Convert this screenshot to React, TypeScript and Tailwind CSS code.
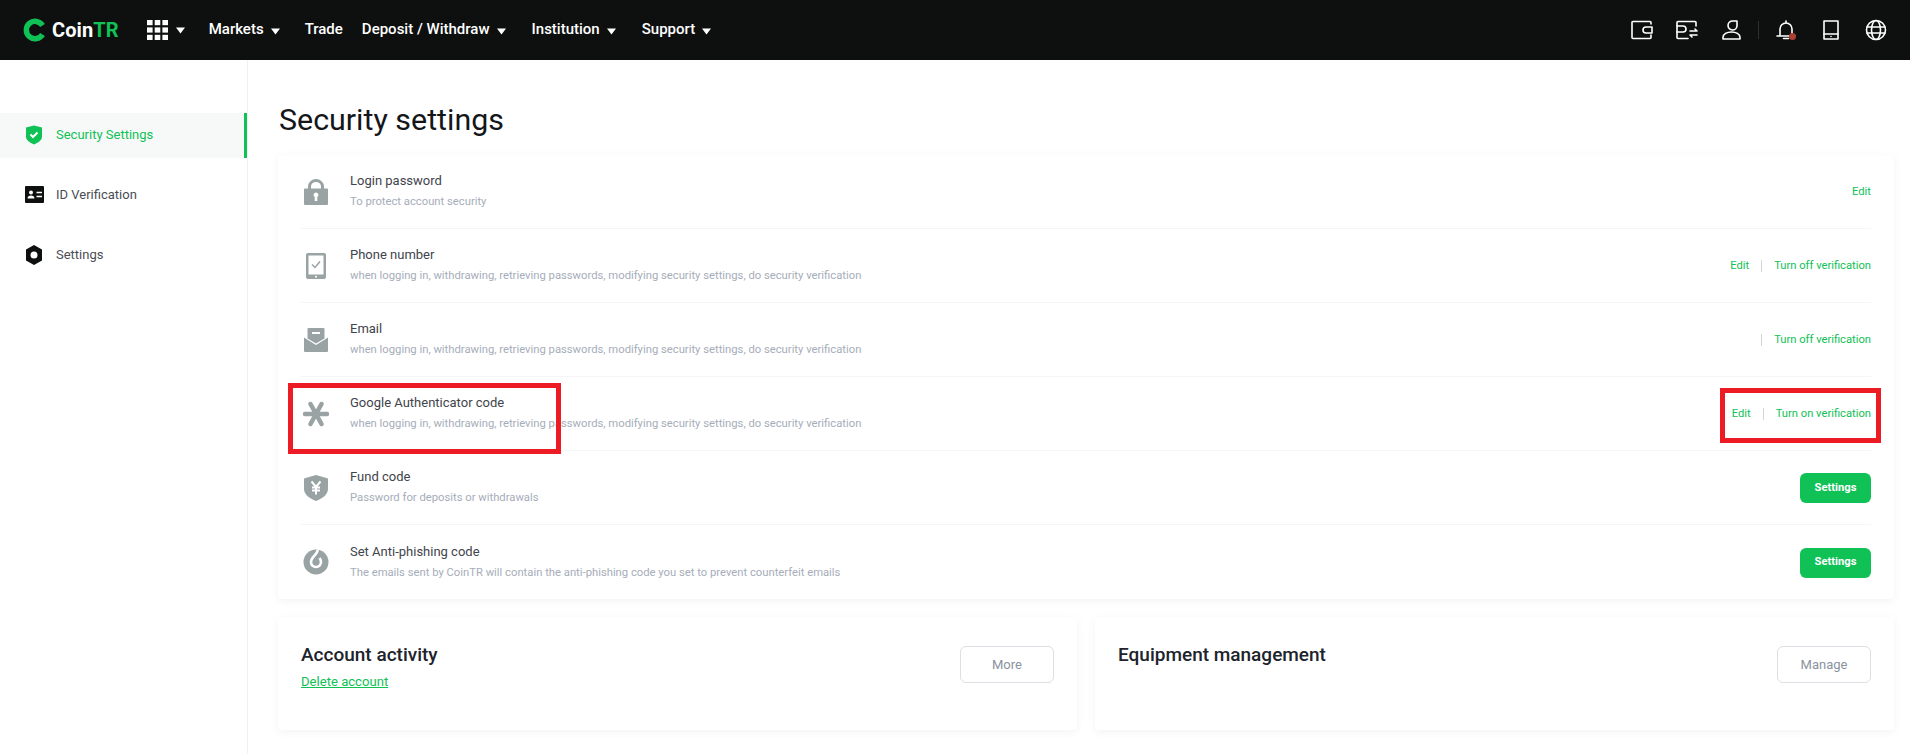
import type { ReactNode } from "react";

const GREEN = "#10c156";

function Caret({ className = "" }: { className?: string }) {
  return (
    <svg width="9" height="7" viewBox="0 0 9 7" className={className}>
      <path d="M0 .5h9L4.5 6.500z" fill="#fff" />
    </svg>
  );
}

function Logo() {
  return (
    <svg width="22" height="24" viewBox="0 0 22 24" className="shrink-0">
      <path
        d="M19.500 7.500A8.700 8.700 0 1 0 19.500 16.500"
        fill="none"
        stroke={GREEN}
        strokeWidth="5.500"
      />
    </svg>
  );
}

function GridIcon() {
  return (
    <svg width="21" height="20" viewBox="0 0 21 20" className="shrink-0">
      {[0, 7.400, 14.800].map((y) =>
        [0, 7.700, 15.400].map((x) => <rect key={`${x}-${y}`} x={x} y={y} width="5.600" height="5.200" fill="#fff" />)
      )}
    </svg>
  );
}

function NavItem({ label, caret = true, className = "" }: { label: string; caret?: boolean; className?: string }) {
  return (
    <div className={`flex items-center gap-[7px] text-[15px] font-medium text-white ${className}`}>
      <span className="pb-[2px]">{label}</span>
      {caret && <Caret className="mt-[3px]" />}
    </div>
  );
}

function HeaderIcons() {
  const stroke = { fill: "none", stroke: "#fff", strokeWidth: 1.6, strokeLinecap: "round" as const, strokeLinejoin: "round" as const };
  return (
    <div className="ml-auto flex items-center pr-[23px]">
      <svg width="22" height="20" viewBox="0 0 22 20" {...stroke}>
        <path d="M20 4V2.500a1 1 0 0 0-1-1H2a1 1 0 0 0-1 1v15a1 1 0 0 0 1 1h17a1 1 0 0 0 1-1V15" />
        <path d="M21 7h-6a3 3 0 0 0 0 6h6z" />
      </svg>
      <svg width="22" height="20" viewBox="0 0 22 20" className="ml-[23px]" {...stroke}>
        <path d="M20 6V2.500a1 1 0 0 0-1-1H2a1 1 0 0 0-1 1v15a1 1 0 0 0 1 1h10" />
        <path d="M1 6h6a3 3 0 0 1 0 6H1" />
        <path d="M14 11h7l-2-2M21 15h-7l2 2" />
      </svg>
      <svg width="19" height="20" viewBox="0 0 19 20" className="ml-[24px]" {...stroke}>
        <path d="M15 1H10a4.500 4.500 0 1 0 5 5z" />
        <path d="M1 19v-1.500C1 14 5 12 9.500 12s8.500 2 8.500 5.500V19z" />
      </svg>
      <div className="ml-[17px] h-[18px] w-px bg-[#2e3030]" />
      <div className="relative ml-[17px] h-[20px] w-[20px]">
        <svg width="20" height="20" viewBox="0 0 20 20" {...stroke}>
          <path d="M10 1v2M4 16V9a6 6 0 0 1 12 0v7M1 16h18M7.500 18.500h5" />
        </svg>
        <span className="absolute right-0 bottom-0 h-[7px] w-[7px] rounded-full bg-[#a8412f]" />
      </div>
      <svg width="16" height="20" viewBox="0 0 16 20" className="ml-[27px]" {...stroke}>
        <rect x="1" y="1" width="14" height="18" />
        <path d="M1 14h14" />
        <path d="M8 16.500h.01" />
      </svg>
      <svg width="22" height="22" viewBox="0 0 22 22" className="ml-[26px]" {...stroke}>
        <circle cx="11" cy="11" r="9.500" />
        <ellipse cx="11" cy="11" rx="4.500" ry="9.500" />
        <path d="M2 8h18M2 14h18" />
      </svg>
    </div>
  );
}

function Header() {
  return (
    <header className="flex h-[60px] items-center bg-[#0e1010] pl-[23px]">
      <Logo />
      <span className="ml-[7px] text-[20px] font-bold tracking-[0.1px] text-white">
        Coin<span className="text-[#10c156]">TR</span>
      </span>
      <div className="ml-[28px] flex items-center gap-[8px]">
        <GridIcon />
        <Caret />
      </div>
      <NavItem label="Markets" className="ml-[24px]" />
      <NavItem label="Trade" caret={false} className="ml-[25px]" />
      <NavItem label="Deposit / Withdraw" className="ml-[19px]" />
      <NavItem label="Institution" className="ml-[26px]" />
      <NavItem label="Support" className="ml-[26px]" />
      <HeaderIcons />
    </header>
  );
}

function SideItem({ icon, label, active = false }: { icon: ReactNode; label: string; active?: boolean }) {
  return (
    <div
      className={`flex h-[45px] items-center pb-[2px] pl-[25px] text-[13px] ${
        active ? "border-r-[3px] border-[#10c156] bg-[#f7f9f8] text-[#10c156]" : "text-[#4a4d55]"
      }`}
    >
      <span className="flex w-[31px] shrink-0">{icon}</span>
      {label}
    </div>
  );
}

function Sidebar() {
  return (
    <aside className="flex w-[248px] shrink-0 flex-col gap-[15px] border-r border-[#f0f1f2] pt-[53px]">
      <SideItem
        active
        label="Security Settings"
        icon={
          <svg width="18" height="20" viewBox="0 0 18 20">
            <path d="M1 2.500 9 .5l8 2V12c0 3-4 6-8 7.500C5 18 1 15 1 12z" fill="#10c156" />
            <path d="m5.500 9.500 2.500 2.500 4.500-4.500" fill="none" stroke="#fff" strokeWidth="2" />
          </svg>
        }
      />
      <SideItem
        label="ID Verification"
        icon={
          <svg width="19" height="17" viewBox="0 0 19 17">
            <rect width="19" height="17" rx="1" fill="#0e1010" />
            <circle cx="6" cy="6.500" r="2" fill="#fff" />
            <path d="M2.500 12.500c0-2 1.500-3 3.500-3s3.500 1 3.500 3z" fill="#fff" />
            <path d="M11.500 6.500H17M11.500 10.500H17" stroke="#fff" strokeWidth="1.500" />
          </svg>
        }
      />
      <SideItem
        label="Settings"
        icon={
          <svg width="18" height="20" viewBox="0 0 18 20">
            <path fillRule="evenodd" d="M9 0l8 4.500v11L9 20l-8-4.500v-11zM9 6.500a3.500 3.500 0 1 0 0 7 3.500 3.500 0 0 0 0-7z" fill="#0e1010" />
          </svg>
        }
      />
    </aside>
  );
}

const GRAY = "#9aa3a3";

const rowIcons: Record<string, ReactNode> = {
  lock: (
    <svg width="24" height="26" viewBox="0 0 24 26">
      <path d="M5.500 11V7.500a6.500 6 0 0 1 13 0V11" fill="none" stroke={GRAY} strokeWidth="3" />
      <path fillRule="evenodd" d="M1 9.500h22a1 1 0 0 1 1 1V25a1 1 0 0 1-1 1H1a1 1 0 0 1-1-1V10.500a1 1 0 0 1 1-1zM12 13.500a2.500 2.500 0 0 0-1.300 4.600V22h2.600v-3.900A2.500 2.500 0 0 0 12 13.500z" fill={GRAY} />
    </svg>
  ),
  phone: (
    <svg width="20" height="26" viewBox="0 0 20 26">
      <path fillRule="evenodd" d="M2 0h16a2 2 0 0 1 2 2v22a2 2 0 0 1-2 2H2a2 2 0 0 1-2-2V2a2 2 0 0 1 2-2zM2.500 2.500v19h15v-19z" fill={GRAY} />
      <path d="m6 11.500 3 3 5-6" fill="none" stroke={GRAY} strokeWidth="1.500" />
      <circle cx="10" cy="23.700" r="1" fill="#fff" />
    </svg>
  ),
  mail: (
    <svg width="24" height="24" viewBox="0 0 24 24">
      <path d="M4.500 0h15a1 1 0 0 1 1 1v9.500L12 15.500l-8.500-5V1a1 1 0 0 1 1-1z" fill={GRAY} />
      <path d="M8 5h8" stroke="#fff" strokeWidth="2" />
      <path d="M0 9.500l12 7.500 12-7.500V23a1 1 0 0 1-1 1H1a1 1 0 0 1-1-1z" fill={GRAY} />
    </svg>
  ),
  asterisk: (
    <svg width="26" height="26" viewBox="0 0 26 26">
      <path d="M13 13 7.500 3M13 13l5.500-10M13 13l-5.500 10M13 13l5.500 10M2 13h22" stroke={GRAY} strokeWidth="4.500" strokeLinecap="round" />
    </svg>
  ),
  fund: (
    <svg width="24" height="26" viewBox="0 0 24 26">
      <path d="M12 0 24 3.500V14c0 5.500-5.500 9.500-12 12C5.500 23.500 0 19.500 0 14V3.500z" fill={GRAY} />
      <path d="m7.500 6.500 4.500 5.500 4.500-5.500M12 12v7.500M8 12.500h8M8 15.500h8" fill="none" stroke="#fff" strokeWidth="2" />
    </svg>
  ),
  flame: (
    <svg width="26" height="26" viewBox="0 0 26 26">
      <circle cx="13" cy="13" r="12.500" fill={GRAY} />
      <path d="M14.500 0.500c1 4.500-6.500 7-6.500 12.500 0 3 2.200 5 5 5s5-2.200 5-5c0-1.500-.6-2.800-1.500-4" fill="none" stroke="#fff" strokeWidth="2.600" />
    </svg>
  ),
};

function Link({ children }: { children: ReactNode }) {
  return <span className="text-[#10c156]">{children}</span>;
}

function Divider() {
  return <span className="mx-[12px] h-[12px] w-px bg-[#d2d4d6]" />;
}

function Row({
  icon,
  title,
  desc,
  action,
  last = false,
}: {
  icon: string;
  title: string;
  desc: string;
  action: ReactNode;
  last?: boolean;
}) {
  return (
    <div className={`flex h-[74px] items-center ${last ? "" : "border-b border-[#f4f5f6]"}`}>
      <span className="flex w-[49px] shrink-0">
        <span className="flex w-[30px] justify-center">{rowIcons[icon]}</span>
      </span>
      <div className="flex flex-col">
        <span className="text-[13px] leading-[20px] text-[#41444b]">{title}</span>
        <span className="mt-[1px] text-[11.25px] leading-[20px] text-[#a6adba]">{desc}</span>
      </div>
      <div className="ml-auto flex items-center pt-[1px] text-[11.2px]">{action}</div>
    </div>
  );
}

function SettingsButton() {
  return (
    <button className="h-[30px] w-[71px] rounded-[6px] bg-[#10c156] text-[11.2px] font-bold text-white">Settings</button>
  );
}

function GhostButton({ children }: { children: ReactNode }) {
  return (
    <button className="mt-[1px] h-[37px] w-[94px] rounded-[6px] border border-[#dcdfe3] text-[13px] text-[#8b93a1]">{children}</button>
  );
}

const LONG_DESC = "when logging in, withdrawing, retrieving passwords, modifying security settings, do security verification";

export default function App() {
  return (
    <div className="relative flex min-h-[754px] flex-col bg-white font-['Roboto',sans-serif]">
      <Header />
      <div className="flex flex-1">
        <Sidebar />
        <main className="flex-1 pr-[16px] pl-[30px]">
          <h1 className="mt-[41px] h-[54px] pl-[1px] text-[30.4px] leading-[38px] font-normal text-[#14161a]">Security settings</h1>
          <section className="rounded-[4px] bg-white px-[23px] shadow-[0_2px_10px_rgba(0,0,0,0.05)]">
            <Row icon="lock" title="Login password" desc="To protect account security" action={<Link>Edit</Link>} />
            <Row
              icon="phone"
              title="Phone number"
              desc={LONG_DESC}
              action={
                <>
                  <Link>Edit</Link>
                  <Divider />
                  <Link>Turn off verification</Link>
                </>
              }
            />
            <Row
              icon="mail"
              title="Email"
              desc={LONG_DESC}
              action={
                <>
                  <Divider />
                  <Link>Turn off verification</Link>
                </>
              }
            />
            <Row
              icon="asterisk"
              title="Google Authenticator code"
              desc={LONG_DESC}
              action={
                <>
                  <Link>Edit</Link>
                  <Divider />
                  <Link>Turn on verification</Link>
                </>
              }
            />
            <Row icon="fund" title="Fund code" desc="Password for deposits or withdrawals" action={<SettingsButton />} />
            <Row
              last
              icon="flame"
              title="Set Anti-phishing code"
              desc="The emails sent by CoinTR will contain the anti-phishing code you set to prevent counterfeit emails"
              action={<SettingsButton />}
            />
          </section>
          <div className="mt-[18px] grid grid-cols-2 gap-[18px]">
            <section className="flex h-[113px] items-start justify-between rounded-[4px] px-[23px] pt-[28px] shadow-[0_2px_10px_rgba(0,0,0,0.05)]">
              <div>
                <h2 className="text-[19px] leading-[20px] font-medium text-[#20232b]">Account activity</h2>
                <a className="mt-[7px] block text-[13.1px] leading-[20px] text-[#10c156] underline">Delete account</a>
              </div>
              <GhostButton>More</GhostButton>
            </section>
            <section className="flex h-[113px] items-start justify-between rounded-[4px] px-[23px] pt-[28px] shadow-[0_2px_10px_rgba(0,0,0,0.05)]">
              <h2 className="text-[19px] leading-[20px] font-medium text-[#20232b]">Equipment management</h2>
              <GhostButton>Manage</GhostButton>
            </section>
          </div>
        </main>
      </div>
      {/* annotation boxes drawn on top of the screenshot */}
      <div className="absolute top-[383px] left-[288px] h-[71px] w-[273px] border-[5px] border-[#ed1c24]" />
      <div className="absolute top-[388px] left-[1720px] h-[55px] w-[161px] border-[5px] border-[#ed1c24]" />
    </div>
  );
}
